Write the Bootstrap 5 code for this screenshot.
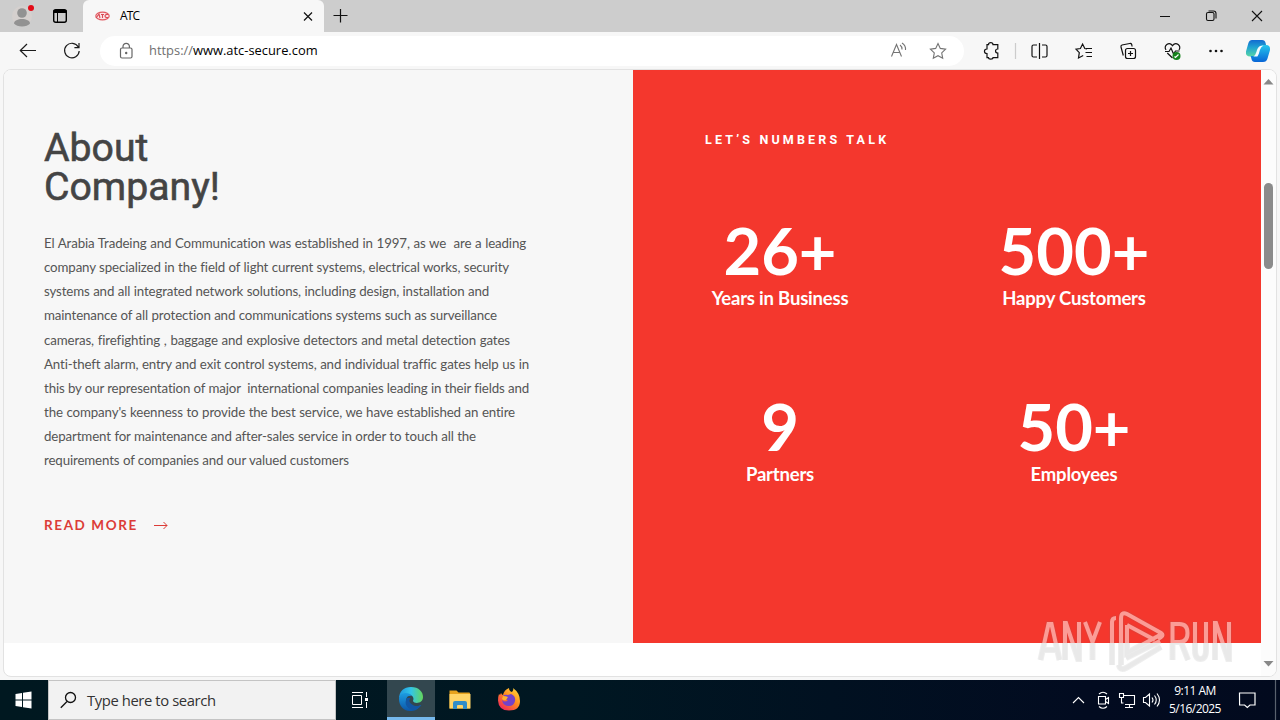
<!DOCTYPE html>
<html lang="en">
<head>
<meta charset="utf-8">
<title>ATC</title>
<link href="https://cdn.jsdelivr.net/npm/bootstrap@5.3.0/dist/css/bootstrap.min.css" rel="stylesheet">
<style>
body{width:1280px;height:720px;overflow:hidden;background:#f7f7f7;font-family:"Open Sans","Noto Sans",sans-serif;color:#000}
svg{display:block;flex:none}
.titlebar{height:32px;background:#cdcdcd}
.tab-left{width:83px;background:#cdcdcd;border-radius:0 0 6px 0;padding-left:12px}
.tab-active{width:241px;background:#f7f7f7;border-radius:6px 6px 0 0;padding-left:12px;font-size:12px;letter-spacing:-.9px}
.tab-active span{margin-left:10px}
.tools{height:38px}
.omnibox{width:864px;height:30px;border-radius:15px;background:#fff;margin-left:19px;padding-left:18px;font-size:12.9px}
.url{margin-left:15px}
.proto{color:#707070}
.viewport{height:608px;margin:-1px 3px 0;border:1px solid #e2e2e2;border-radius:8px;background:#fff;overflow:hidden}
.about{width:629px;height:573px;background:#f7f7f7;padding:59px 0 0 40px;font-family:Lato,sans-serif}
.about h1{font:400 39.2px/39px Roboto,sans-serif;color:#444;margin:0 0 24px;-webkit-text-stroke:.6px #444}
.copy{font-size:13.3px;line-height:24.15px;color:#555;letter-spacing:-.13px;white-space:nowrap}
.copy div{text-align-last:justify}
.more{margin-top:40px;font-size:13.5px;line-height:24px;font-weight:700;letter-spacing:1.6px;color:#dc3c37}
.numbers{width:628px;height:573px;background:#f4372d;color:#fff;padding:60px 40px 0 39px;font-family:Lato,sans-serif}
.eyebrow{font:700 12.5px/20px Roboto,sans-serif;letter-spacing:3.18px;padding-left:33px;margin-bottom:64px}
.stats{margin-left:-39px}
.stat{width:294px;height:176px;font-size:18.5px;line-height:24px;font-weight:700;text-align:center;letter-spacing:-.2px}
.stat strong{display:block;font-size:65px;line-height:72px;font-weight:700;letter-spacing:0}
.scroller{width:15px;height:606px;background:#fcfcfc}
.thumb{width:9px;height:86px;border-radius:5px;background:#8b8b8b;margin-top:98px}
.gapline{height:3px}
.taskbar{height:40px;background:linear-gradient(90deg,#001820 0%,#001722 45%,#020b20 85%,#020a1e 100%);color:#fff}
.searchbox{width:288px;background:#f2f2f2;border:1px solid #c4c4c4;color:#333;font-size:14.8px;padding-left:11px}
.searchbox span{margin-left:10px;letter-spacing:-.4px}
.edgeapp{width:48px;background:#33474f;border-bottom:3px solid #76b9ed}
.clock{font-size:12px;line-height:18px;width:56px;letter-spacing:-.55px;white-space:nowrap;margin-top:-2px}
.wm{position:absolute;left:1034px;top:606px}
</style>
</head>
<body>
<header class="titlebar d-flex">
  <div class="tab-left d-flex align-items-center">
    <svg width="64" height="32" viewBox="0 0 64 32"><circle cx="10" cy="16" r="10" fill="#d5d0ce"/><circle cx="10" cy="13" r="4.800" fill="#929292"/><path d="M2 23.500c0-6 16-6 16 0-3 4-13 4-16 0z" fill="#929292"/><circle cx="19" cy="8" r="3" fill="#e30b17"/><rect x="41.700" y="9.700" width="12.600" height="12.600" rx="2" fill="none" stroke="#000" stroke-width="1.400"/><path d="M41.500 11.500h13" stroke="#000" stroke-width="3"/><path d="M45.500 12v10" stroke="#000"/></svg>
  </div>
  <div class="tab-active d-flex align-items-center">
    <svg width="15" height="10" viewBox="0 0 15 10"><ellipse cx="7.500" cy="5" rx="6.700" ry="3.800" fill="#fbe4e6" stroke="#e25a61" stroke-width="1.200"/><path d="M1 7l3-4 1 4M6 3.500h3M7.500 3.500V7M13 3.500c-4-1-4 4 0 3" fill="none" stroke="#d94a54" stroke-width="1.100"/></svg>
    <span>ATC</span>
    <svg class="ms-auto me-2" width="16" height="16" viewBox="0 0 16 16"><path d="M4 4.500l8 8M12 4.500l-8 8" stroke="#111" stroke-width="1.200"/></svg>
  </div>
  <svg width="32" height="32" viewBox="0 0 32 32"><path d="M9.500 15.500h14M16.500 9v13.500" stroke="#111" stroke-width="1.200"/></svg>
  <svg class="ms-auto" width="124" height="32" viewBox="0 0 124 32" fill="none" stroke="#111" stroke-width="1.100"><path d="M4 16.500h10M96 11l10 10M106 11l-10 10"/><rect x="50.500" y="12.500" width="7.500" height="8" rx="1.500"/><path d="M52.500 11h5q2.500 0 2.500 2.500v5"/></svg>
</header>

<nav class="tools d-flex align-items-center">
  <svg width="81" height="38" viewBox="0 0 81 38" fill="none" stroke="#1b1b1b" stroke-width="1.200"><path d="M36 18.500H20.500M27 12l-6.700 6.500L27 25"/><path d="M78.300 15a7.300 7.300 0 1 0 .9 4M79 11v4.600h-4.600"/></svg>
  <div class="omnibox d-flex align-items-center">
    <svg width="16" height="18" viewBox="0 0 16 18" fill="none" stroke="#666" stroke-width="1.200"><rect x="2.500" y="6" width="11.500" height="10" rx="1.500"/><path d="M5 6V4.500a3.200 3.200 0 0 1 6.400 0V6"/><circle cx="8.200" cy="11" r=".6" fill="#666"/></svg>
    <span class="url"><span class="proto">https://</span>www.atc-secure.com</span>
    <svg class="ms-auto me-3" width="60" height="24" viewBox="0 0 60 24" fill="none" stroke="#747474" stroke-width="1.100"><path d="M3.500 17.500L8.500 5.500l5 12M5 13.500h7M12 6q2.200 1.500 2 4.500M14 4q4 2.500 3.500 7"/><path d="M50 4.500l2.300 4.900 5.300.7-3.900 3.800 1 5.400L50 16.700l-4.700 2.600 1-5.400-3.900-3.800 5.300-.7z"/></svg>
  </div>
  <svg width="316" height="38" viewBox="964 32 316 38" fill="none" stroke="#111" stroke-width="1.200">
    <path d="M987 44.700h1.500c0-2.700 4.500-2.700 4.500 0h4.800v4.300c-3 0-3 4 0 4v4.700H993c0 1.800-4.500 1.800-4.500 0H987V53.500c-3.400 0-3.400-4.500 0-4.500z"/>
    <path d="M1015.500 43v16" stroke="#ccc"/>
    <path d="M1037 45h-3.500q-1.500 0-1.500 1.500v9q0 1.500 1.500 1.500h3.500M1042 45h3.500q1.500 0 1.500 1.500v9q0 1.500-1.500 1.500H1042M1039.500 43v16"/>
    <path d="M1087 48.800l-2.200-.3-2.200-4.500-2.200 4.500-4.400.7 3.300 3.500-.8 5.300 4.700-2.500M1086 48.500h6M1085.500 52.500h6.500M1086.500 56.500h5.500"/>
    <rect x="1125.500" y="48.500" width="10" height="10" rx="2"/><path d="M1130.500 51v5M1128 53.500h5M1123.300 55.500l-2.300-8.500q-.4-1.500 1-2l7.700-1.500q1.500-.3 2 1l.4 2"/>
    <path d="M1166 50c-3-4 3-9 6.500-4.300 3.500-4.700 9.500.3 6.500 4.300M1165 51.500h4l2-3.500 2.500 6 2-3h4M1167.300 53l5.200 5"/><circle cx="1176.500" cy="56" r="4" fill="#16821c" stroke="none"/><path d="M1174.500 56.500l1 1 3-3" stroke="#fff"/>
    <g fill="#111" stroke="none"><circle cx="1210.500" cy="51" r="1.300"/><circle cx="1216" cy="51" r="1.300"/><circle cx="1221.500" cy="51" r="1.300"/></g>
    <defs><linearGradient id="c1" x2="0" y2="1"><stop stop-color="#126bd1"/><stop offset=".45" stop-color="#20a3d1"/><stop offset="1" stop-color="#58d6a6"/></linearGradient><linearGradient id="c2" x2="0" y2="1"><stop stop-color="#23c6ed"/><stop offset="1" stop-color="#0865d6"/></linearGradient></defs>
    <g stroke="none"><path d="M1252 40h10q3 0 3.600 3l.7 3h-3q-3 0-4 3l-2 5q-1 2.500-4 2.500h-3q-5 0-4.300-5l2.400-8.500q1-3 3.600-3z" fill="url(#c1)"/><path d="M1263 45h3q4.500 0 4 5l-2.500 8.500q-1 3.500-4.500 3.500h-8q-3 0-3.500-3l-.8-3h3q3 0 4-3l1.800-5q1-3 3.500-3z" fill="url(#c2)"/><path d="M1260 46l3.500-.6q-2.500 1-3.600 4.600-1 4.500-2.500 6.500h-4q2-1 3-4.500 1-4.500 3.600-6z" fill="#f2fbff"/></g>
  </svg>
</nav>

<main class="viewport d-flex">
  <section class="about">
    <h1>About<br>Company!</h1>
    <div class="copy">
      <div style="width:482px">El Arabia Tradeing and Communication was established in 1997, as we&nbsp; are a leading</div>
      <div style="width:465px">company specialized in the field of light current systems, electrical works, security</div>
      <div style="width:445px">systems and all integrated network solutions, including design, installation and</div>
      <div style="width:453px">maintenance of all protection and communications systems such as surveillance</div>
      <div style="width:466px">cameras, firefighting , baggage and explosive detectors and metal detection gates</div>
      <div style="width:485px">Anti-theft alarm, entry and exit control systems, and individual traffic gates help us in</div>
      <div style="width:485px">this by our representation of major&nbsp; international companies leading in their fields and</div>
      <div style="width:471px">the company's keenness to provide the best service, we have established an entire</div>
      <div style="width:432px">department for maintenance and after-sales service in order to touch all the</div>
      <div style="width:305px">requirements of companies and our valued customers</div>
    </div>
    <div class="more d-flex align-items-center">READ MORE<svg class="ms-3" width="14" height="10" viewBox="0 0 14 10" fill="none" stroke="#dc3c37"><path d="M0 5.500h13M9.500 2l3.500 3.500L9.500 9"/></svg></div>
  </section>
  <section class="numbers">
    <div class="eyebrow">LET’S NUMBERS TALK</div>
    <div class="d-flex flex-wrap stats">
      <div class="stat"><strong>26+</strong>Years in Business</div>
      <div class="stat"><strong>500+</strong>Happy Customers</div>
      <div class="stat"><strong>9</strong>Partners</div>
      <div class="stat"><strong>50+</strong>Employees</div>
    </div>
  </section>
  <div class="scroller d-flex flex-column align-items-center">
    <svg class="mt-2" width="11" height="7" viewBox="0 0 11 7"><path d="M.5 6.500h10L5.500 1z" fill="#888"/></svg>
    <div class="thumb"></div>
    <svg class="mt-auto mb-2" width="11" height="7" viewBox="0 0 11 7"><path d="M.5 0h10L5.500 5.500z" fill="#888"/></svg>
  </div>
</main>
<div class="gapline"></div>

<footer class="taskbar d-flex">
  <svg width="48" height="40" viewBox="0 0 48 40" fill="#fff"><path d="M15.500 14l6.500-1v6.500h-6.500zM23 12.800l8.500-1.300v8H23zM15.500 20.500H22V27l-6.500-1zM23 20.500h8.500v8L23 27.200z"/></svg>
  <div class="searchbox d-flex align-items-center"><svg width="17" height="18" viewBox="0 0 17 18" fill="none" stroke="#111" stroke-width="1.300"><circle cx="10.500" cy="6.500" r="5"/><path d="M7 10.500L.8 16.800"/></svg><span>Type here to search</span></div>
  <svg width="51" height="40" viewBox="336 0 51 40" fill="none" stroke="#fff"><path d="M352 12.500h11M352 27.500h11M352.500 15.500h9v9h-9zM366.500 12v5M366.500 22v6"/><path d="M366.500 18v3" stroke-width="3"/></svg>
  <div class="edgeapp d-flex justify-content-center align-items-center">
    <svg width="26" height="26" viewBox="0 0 26 26"><defs><linearGradient id="e1"><stop stop-color="#1d96df"/><stop offset=".5" stop-color="#33c5e8"/><stop offset="1" stop-color="#64d65b"/></linearGradient><linearGradient id="e2" x2="0" y2="1"><stop stop-color="#1c9de2"/><stop offset="1" stop-color="#0c56a8"/></linearGradient></defs><path d="M1 13C1 5 6 1 13 1c8 0 12 5 12 10 0 7-9 7-10 4 2-4-2-7-6-7-5 0-8 3-8 5z" fill="url(#e1)"/><path d="M1 13c0-7 10-8 13-3-5-1-7 3-5 7 3 5 9 5 14 2-3 5-7 6-11 6C5 25 1 19 1 13z" fill="url(#e2)"/><path d="M9 12c-4 6 1 12 7 12 3-1 6-3 7.500-5-4 2-8 1-10-1-2-1.500-3-3.500-1-6z" fill="#1256a3"/></svg>
  </div>
  <svg width="110" height="40" viewBox="435 0 110 40"><path d="M449.500 10.500h7l2 2h10.500q1 0 1 1v15h-20.500z" fill="#e6a21d"/><path d="M449.500 14h21v14.500h-21z" fill="#ffd467"/><path d="M453 29v-6q0-2 2-2h10q2 0 2 2v6h-4v-3q0-1-1-1h-4q-1 0-1 1v3z" fill="#318dc8"/>
    <defs><linearGradient id="f1" x1="1" x2=".2" y2="1"><stop stop-color="#ffe340"/><stop offset=".5" stop-color="#ff8b1e"/><stop offset="1" stop-color="#ef245d"/></linearGradient></defs><path d="M499 14l1 1 1-2q1 2 2 2 1-5 6-7 0 3 3 4 2-2 1-4 7 5 7 13 0 9.500-11 9.500-10.500 0-11-10 0-4 1-6.500z" fill="url(#f1)"/><path d="M503 16q2-2 5-1l3-1q5 2 4 7-1 5-6 5-6 0-7-6 3 3 6 0-3 0-5-4z" fill="#7442c8"/><path d="M503 16q3 0 5 1l-2 3q-2 1-4-1z" fill="#ffb22c"/></svg>
  <svg class="ms-auto" width="97" height="40" viewBox="1070 0 97 40" fill="none" stroke="#fff" stroke-width="1.100"><path d="M1073 23l5.500-5.500L1084 23M1098.500 16.500h7v7.500h-7zM1105.500 19.500l3-2v6l-3-2M1099 14q4-3.500 8 0M1099 26.500q4 3.500 8 0"/><path d="M1123.500 15.500h11v9h-9.500M1129.500 24.500v3M1125 27.500h8M1119.500 13.500h4v4h-4zM1121.500 17.500v5.500h2"/><path d="M1143.500 17.500h2l4-3.500v12l-4-3.500h-2zM1152 17.500q2 2.500 0 5M1154.500 15.500q3.500 4.500 0 9M1157 13.500q5 6.500 0 13"/></svg>
  <div class="clock text-center pt-1">9:11 AM<br>5/16/2025</div>
  <svg width="57" height="40" viewBox="1223 0 57 40" fill="none" stroke="#fff" stroke-width="1.200"><path d="M1239.500 13h15.500v12h-5l-2.700 2.500-2.700-2.500h-5z"/><path d="M1275.500 0v40" stroke="#59616d"/></svg>
</footer>

<svg class="wm" width="204" height="72" viewBox="1034 606 204 72">
  <defs>
    <linearGradient id="w" gradientUnits="userSpaceOnUse" x1="0" y1="606" x2="0" y2="678"><stop offset=".513" stop-color="#fb9c96"/><stop offset=".514" stop-color="#e9e9e9"/></linearGradient>
    <g id="logo"><path d="M1040.500 660l8-36h3l8 36M1043 650h14M1065 660v-37h1l12 36h1v-37M1085 622l7.500 20 7.500-20M1092.500 641v19"/><path d="M1172.500 660v-36h7q8 0 8 9t-8 9h-7M1181 642l7 18M1195 622v28q0 9 5.500 9t5.500-9v-28M1215 660v-37h1l12 36h1v-37"/><path d="M1116 618q-4 0-4 4v43M1121 665v-46q0-8 6-5l34 19q3 2 0 4l-3 2M1127 625l28 15M1127 625v28l33-18M1119 665q1 6 7 3l35-21M1126 658l34-17"/></g>
  </defs>
  <use href="#logo" fill="none" stroke="#777" stroke-opacity=".12" stroke-width="6"/>
  <use href="#logo" fill="none" stroke="url(#w)" stroke-width="4"/>
</svg>
<script src="https://cdn.jsdelivr.net/npm/bootstrap@5.3.0/dist/js/bootstrap.bundle.min.js"></script>
</body>
</html>
